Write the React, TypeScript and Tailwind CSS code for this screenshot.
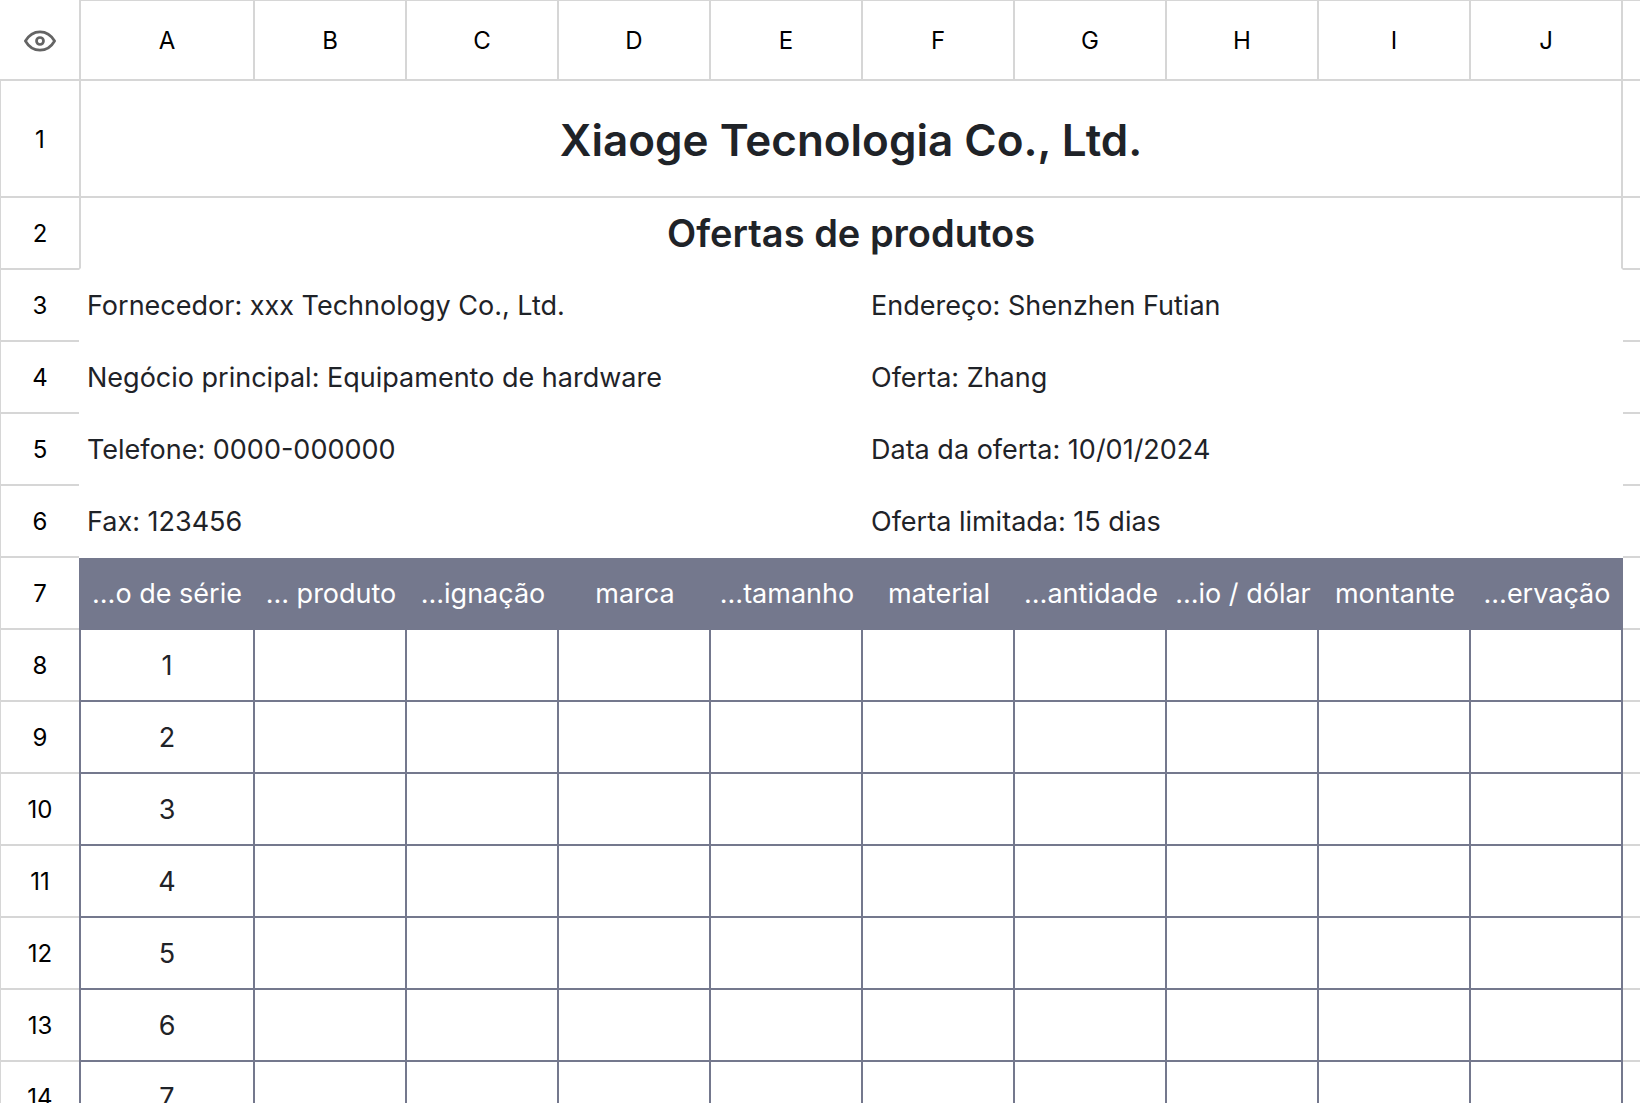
import React from 'react';

const COLUMNS = ['A', 'B', 'C', 'D', 'E', 'F', 'G', 'H', 'I', 'J'];

const DETAILS = [
  { row: 3, left: 'Fornecedor: xxx Technology Co., Ltd.', right: 'Endereço: Shenzhen Futian' },
  { row: 4, left: 'Negócio principal: Equipamento de hardware', right: 'Oferta: Zhang' },
  { row: 5, left: 'Telefone: 0000-000000', right: 'Data da oferta: 10/01/2024' },
  { row: 6, left: 'Fax: 123456', right: 'Oferta limitada: 15 dias' },
];

const HEADINGS = [
  '…o de série',
  '… produto',
  '…ignação',
  'marca',
  '…tamanho',
  'material',
  '…antidade',
  '…io / dólar',
  'montante',
  '…ervação',
];

const ITEMS = [1, 2, 3, 4, 5, 6, 7];

function EyeIcon() {
  return (
    <svg
      className="mx-auto h-6 w-8"
      viewBox="0 0 32 24"
      fill="none"
      stroke="currentColor"
      strokeWidth={2.7}
      strokeLinejoin="round"
      aria-hidden="true"
    >
      <path d="M1.4 12C5 5.8 10 2.8 16 2.8S27 5.8 30.6 12C27 18.2 22 21.2 16 21.2S5 18.2 1.4 12Z" />
      <circle cx="16" cy="12" r="3.5" />
    </svg>
  );
}

function RowLabel({ value }: { value: number }) {
  return (
    <th scope="row" className="border-b-2 border-l border-[#d6d6d6] p-0 pt-0.5 text-2xl font-normal text-black">
      {value}
    </th>
  );
}

// the sliver of the next column at the right edge
function NextColumnCell() {
  return <td className="border-b-2 border-[#d6d6d6]" />;
}

export default function App() {
  return (
    <div className="h-screen overflow-hidden bg-white font-['Inter',sans-serif] text-[#1f2328]">
      <table className="w-full table-fixed border-separate border-spacing-0">
        <colgroup>
          <col className="w-[79px]" />
          {COLUMNS.map((name, i) => (
            <col key={name} className={i === 0 ? 'w-[176px]' : 'w-[152px]'} />
          ))}
          <col />
        </colgroup>
        <thead>
          <tr className="h-[81px]">
            <td className="border-b-2 border-[#d6d6d6] p-0 pt-0.5 text-[#646464]">
              <button type="button" aria-label="Visualizar" className="block w-full">
                <EyeIcon />
              </button>
            </td>
            {COLUMNS.map((name, i) => (
              <th
                key={name}
                scope="col"
                className={
                  i === 0
                    ? 'border-x-2 border-t border-b-2 border-[#d6d6d6] p-0 pt-0.5 text-2xl font-normal text-black'
                    : 'border-t border-r-2 border-b-2 border-[#d6d6d6] p-0 pt-0.5 text-2xl font-normal text-black'
                }
              >
                {name}
              </th>
            ))}
            <td className="border-t border-b-2 border-[#d6d6d6]" />
          </tr>
        </thead>
        <tbody>
          <tr className="h-[117px]">
            <RowLabel value={1} />
            <td colSpan={10} className="border-x-2 border-b-2 border-[#d6d6d6] p-0 pt-0.5 text-center">
              <h1 className="text-[44px] leading-14 font-semibold">Xiaoge Tecnologia Co., Ltd.</h1>
            </td>
            <NextColumnCell />
          </tr>
          <tr className="h-[72px]">
            <RowLabel value={2} />
            <td colSpan={10} className="border-x-2 border-b-2 border-x-[#d6d6d6] border-b-white p-0 text-center">
              <h2 className="text-[38px] leading-12 font-semibold">Ofertas de produtos</h2>
            </td>
            <NextColumnCell />
          </tr>
          {DETAILS.map((detail) => (
            <tr key={detail.row} className="h-[72px]">
              <RowLabel value={detail.row} />
              <td colSpan={5} className="border-b-2 border-white p-0 pt-0.5 pl-2 text-[27px]">
                {detail.left}
              </td>
              <td colSpan={5} className="border-b-2 border-white p-0 pt-0.5 pl-2 text-[27px]">
                {detail.right}
              </td>
              <NextColumnCell />
            </tr>
          ))}
          <tr className="h-[72px]">
            <RowLabel value={7} />
            {HEADINGS.map((heading) => (
              <td
                key={heading}
                className="border-b-2 border-[#74788d] bg-[#74788d] p-0 pt-0.5 text-center text-[27px] whitespace-nowrap text-white"
              >
                {heading}
              </td>
            ))}
            <NextColumnCell />
          </tr>
          {ITEMS.map((item) => (
            <tr key={item} className="h-[72px]">
              <RowLabel value={item + 7} />
              <td className="border-x-2 border-b-2 border-[#74788d] p-0 pt-0.5 text-center text-[27px]">{item}</td>
              {COLUMNS.slice(1).map((name) => (
                <td key={name} className="border-r-2 border-b-2 border-[#74788d]" />
              ))}
              <NextColumnCell />
            </tr>
          ))}
        </tbody>
      </table>
    </div>
  );
}
